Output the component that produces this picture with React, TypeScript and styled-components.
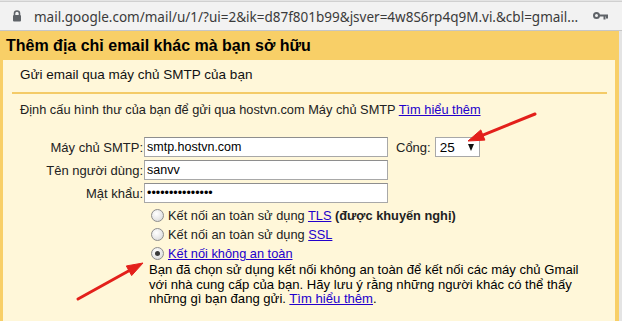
import React from "react"
import styled, { createGlobalStyle } from "styled-components"

const GlobalStyle = createGlobalStyle`
  html, body {
    margin: 0;
    padding: 0;
    background: #fff;
  }
  body {
    font-family: "Liberation Sans", Arial, sans-serif;
    color: #000;
  }
`

const yellow = "#f8cf67"
const cream = "#fff7d9"
const link = "#2200cc"

const Window = styled.div`
  position: relative;
  width: 622px;
  height: 321px;
  overflow: hidden;
  display: flex;
  flex-direction: column;
  background: #e4e4e4;
`

const AddressBar = styled.div`
  flex: none;
  height: 28px;
  margin-top: 1px;
  display: flex;
  align-items: center;
  gap: 12px;
  padding: 0 14px 0 12px;
  background: #f2f2f2;
  border-top: 1px solid #d0d0d0;
  border-bottom: 1px solid #c6c6c6;
`

const Url = styled.div`
  flex: 1;
  white-space: nowrap;
  overflow: hidden;
  font-family: "Noto Sans", "Open Sans", sans-serif;
  font-size: 13.5px;
  color: #3b3b3b;
  padding-top: 2px;
`

const Dialog = styled.div`
  flex: 1;
  display: flex;
  flex-direction: column;
  margin-right: 3px;
  border-left: 3px solid ${yellow};
  border-right: 4px solid ${yellow};
`

const Header = styled.h1`
  flex: none;
  margin: 0;
  height: 29px;
  line-height: 29px;
  padding-left: 3px;
  background: ${yellow};
  font-size: 16px;
  font-weight: bold;
  white-space: nowrap;
`

const Panel = styled.div`
  flex: 1;
  background: ${cream};
  font-size: 13px;
`

const SectionTitle = styled.h2`
  margin: 0;
  padding: 7px 0 0 17px;
  font-size: 13.5px;
  font-weight: normal;
  line-height: 16px;
  color: #111;
`

const Divider = styled.hr`
  margin: 9px 8px 0 9px;
  height: 2px;
  border: 0;
  background: #f4cb68;
`

const Intro = styled.p`
  margin: 8px 0 0 17px;
  line-height: 16px;
  font-size: 12.8px;
  color: #222;
`

const Link = styled.a`
  color: ${link};
  text-decoration: underline;
`

const Form = styled.div`
  margin: 19px 0 0 17px;
  display: flex;
  flex-direction: column;
  gap: 3px;
`

const FieldRow = styled.div`
  display: flex;
  align-items: center;
  height: 20px;
`

const Label = styled.label`
  width: 124px;
  padding-right: 1px;
  box-sizing: border-box;
  text-align: right;
  color: #222;
  white-space: nowrap;
`

const Input = styled.input`
  width: 244px;
  height: 20px;
  box-sizing: border-box;
  margin: 0;
  padding: 0 2px;
  border: 1px solid #a8a8a8;
  border-top-color: #8e8e8e;
  background: #fff;
  font-family: "Liberation Sans", Arial, sans-serif;
  font-size: 12.5px;
  color: #000;
  outline: none;
`

const PortLabel = styled.span`
  margin-left: 8px;
  margin-right: 4px;
  color: #222;
`

const SelectBox = styled.div`
  width: 45px;
  height: 20px;
  box-sizing: border-box;
  display: flex;
  align-items: center;
  justify-content: space-between;
  padding: 0 5px 0 4px;
  border: 1px solid #a8a8a8;
  background: #fff;
  font-size: 13.5px;
`

const Caret = styled.span`
  width: 0;
  height: 0;
  margin-top: 1px;
  border-left: 3.5px solid transparent;
  border-right: 3.5px solid transparent;
  border-top: 7px solid #111;
`

const RadioList = styled.div`
  margin: 3px 0 0 145px;
  display: flex;
  flex-direction: column;
  font-size: 12.8px;
`

const RadioRow = styled.label`
  display: flex;
  align-items: center;
  gap: 4px;
  height: 19px;
  padding-left: 3px;
  color: #222;
  white-space: nowrap;
`

const Radio = styled.span<{ $checked?: boolean }>`
  width: 13px;
  height: 13px;
  box-sizing: border-box;
  border-radius: 50%;
  border: 1px solid #8d8d8d;
  background: radial-gradient(circle at 40% 35%, #ffffff 0%, #e6e6e6 60%, #cfcfcf 100%);
  display: flex;
  align-items: center;
  justify-content: center;
  &::after {
    content: "";
    display: ${(p) => (p.$checked ? "block" : "none")};
    width: 5px;
    height: 5px;
    border-radius: 50%;
    background: #3a3a3a;
  }
`

const Strong = styled.b`
  font-weight: bold;
`

const Warning = styled.p`
  margin: 0 0 0 146px;
  line-height: 14.5px;
  font-size: 13.1px;
  color: #000;
`

const Overlay = styled.svg`
  position: absolute;
  left: 0;
  top: 0;
  pointer-events: none;
`

const LockIcon = () => (
  <svg width="10" height="12" viewBox="0 0 10 12">
    <path d="M2.5 5V3.5a2.5 2.5 0 0 1 5 0V5" fill="none" stroke="#5f6368" strokeWidth="1.6" />
    <rect x="1" y="5" width="8" height="6.5" rx="1" fill="#5f6368" />
  </svg>
)

const KeyIcon = () => (
  <svg width="15" height="8" viewBox="0 0 15 8">
    <circle cx="3.5" cy="3.5" r="2.5" fill="none" stroke="#5f6368" strokeWidth="2" />
    <path d="M6 2.5h9v2H6z M10.5 4h2v3.5h-2z M13 4h2v2.5h-2z" fill="#5f6368" />
  </svg>
)

const Arrow = ({ x1, y1, x2, y2 }: { x1: number; y1: number; x2: number; y2: number }) => {
  const dx = x2 - x1
  const dy = y2 - y1
  const len = Math.hypot(dx, dy)
  const ux = dx / len
  const uy = dy / len
  const bx = x2 - ux * 16
  const by = y2 - uy * 16
  const px = -uy * 5.5
  const py = ux * 5.5
  return (
    <g fill="#e3201b" stroke="#e3201b">
      <line x1={x1} y1={y1} x2={bx + ux * 2} y2={by + uy * 2} strokeWidth="3" strokeLinecap="round" />
      <polygon points={`${x2},${y2} ${bx + px},${by + py} ${bx - px},${by - py}`} strokeWidth="1" strokeLinejoin="round" />
    </g>
  )
}

export default function App() {
  return (
    <>
      <GlobalStyle />
      <Window>
        <AddressBar>
          <LockIcon />
          <Url>mail.google.com/mail/u/1/?ui=2&amp;ik=d87f801b99&amp;jsver=4w8S6rp4q9M.vi.&amp;cbl=gmail...</Url>
          <KeyIcon />
        </AddressBar>
        <Dialog>
          <Header>Thêm địa chỉ email khác mà bạn sở hữu</Header>
          <Panel>
            <SectionTitle>Gửi email qua máy chủ SMTP của bạn</SectionTitle>
            <Divider />
            <Intro>
              Định cấu hình thư của bạn để gửi qua hostvn.com Máy chủ SMTP <Link href="#">Tìm hiểu thêm</Link>
            </Intro>
            <Form>
              <FieldRow>
                <Label>Máy chủ SMTP:</Label>
                <Input defaultValue="smtp.hostvn.com" />
                <PortLabel>Cổng:</PortLabel>
                <SelectBox>
                  <span>25</span>
                  <Caret />
                </SelectBox>
              </FieldRow>
              <FieldRow>
                <Label>Tên người dùng:</Label>
                <Input defaultValue="sanvv" />
              </FieldRow>
              <FieldRow>
                <Label>Mật khẩu:</Label>
                <Input type="password" defaultValue="xxxxxxxxxxxxxxx" />
              </FieldRow>
            </Form>
            <RadioList>
              <RadioRow>
                <Radio />
                <span>
                  Kết nối an toàn sử dụng <Link href="#">TLS</Link> <Strong>(được khuyến nghị)</Strong>
                </span>
              </RadioRow>
              <RadioRow>
                <Radio />
                <span>
                  Kết nối an toàn sử dụng <Link href="#">SSL</Link>
                </span>
              </RadioRow>
              <RadioRow>
                <Radio $checked />
                <Link href="#">Kết nối không an toàn</Link>
              </RadioRow>
            </RadioList>
            <Warning>
              Bạn đã chọn sử dụng kết nối không an toàn để kết nối các máy chủ Gmail
              <br />
              với nhà cung cấp của bạn. Hãy lưu ý rằng những người khác có thể thấy
              <br />
              những gì bạn đang gửi. <Link href="#">Tìm hiểu thêm</Link>.
            </Warning>
          </Panel>
        </Dialog>
        <Overlay width="622" height="321" viewBox="0 0 622 321">
          <Arrow x1={535} y1={114} x2={468} y2={141} />
          <Arrow x1={78} y1={299} x2={143} y2={263} />
        </Overlay>
      </Window>
    </>
  )
}
